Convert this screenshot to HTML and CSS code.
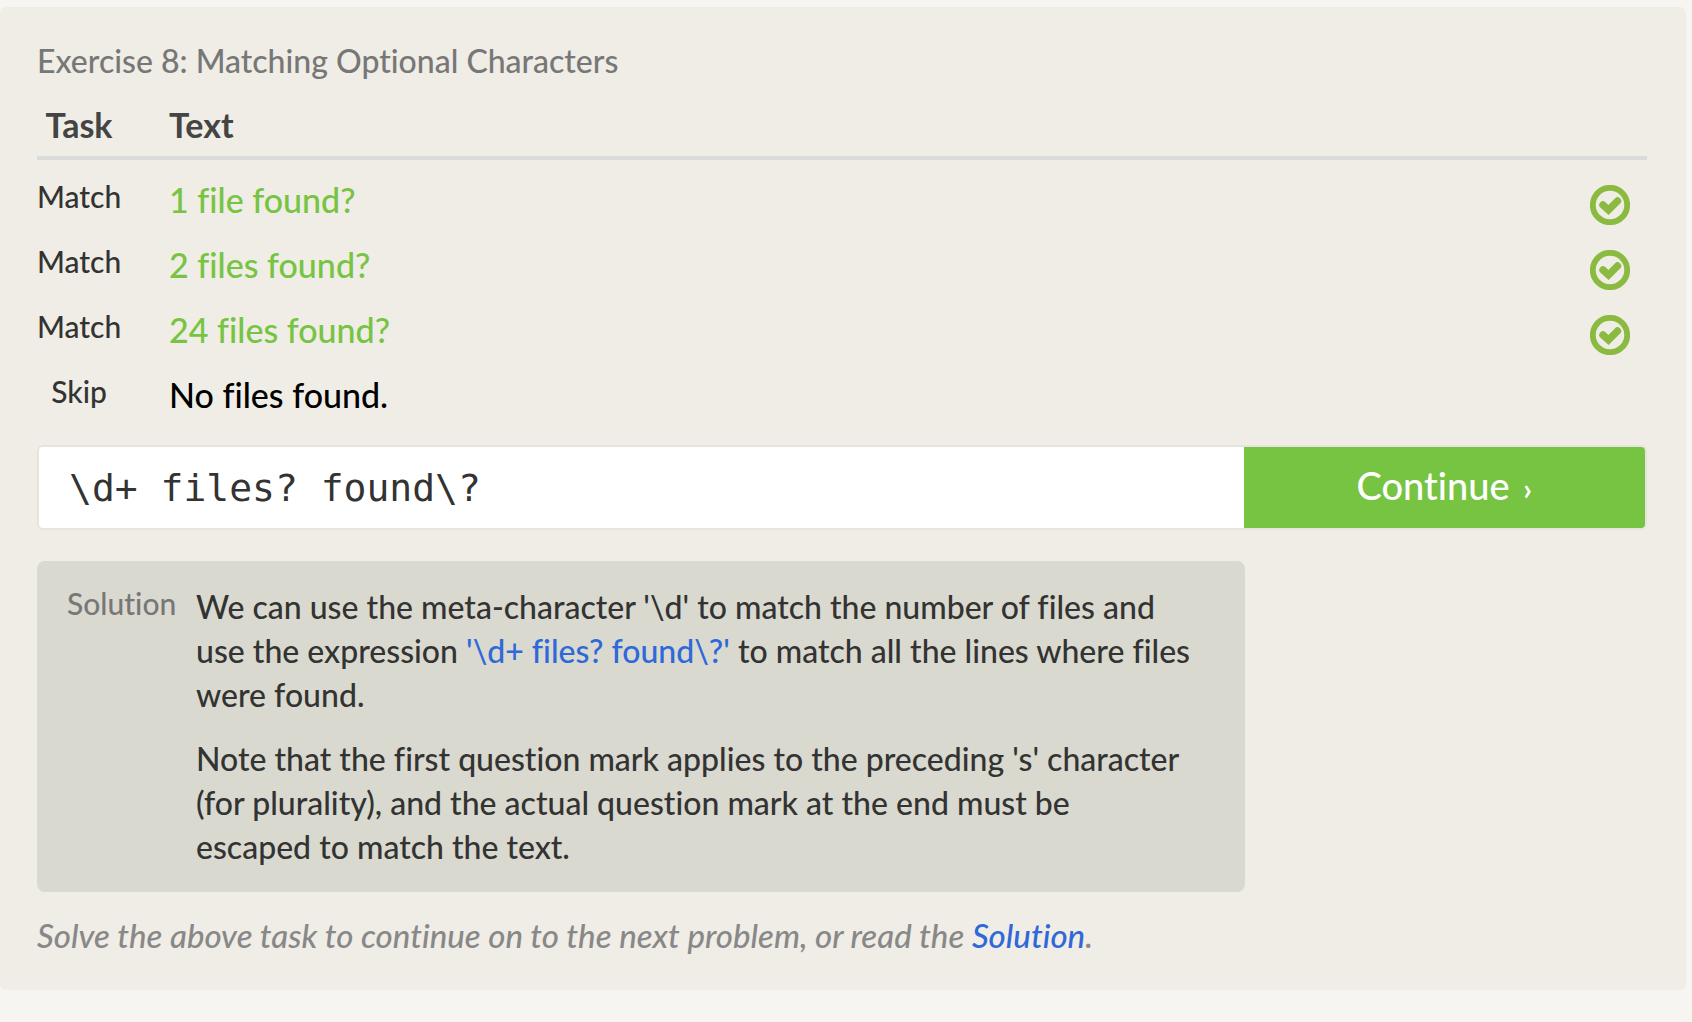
FILE: index.html
```html
<!DOCTYPE html>
<html lang="en">
<head>
<meta charset="utf-8">
<meta name="viewport" content="width=device-width, initial-scale=1">
<title>Exercise 8: Matching Optional Characters</title>
<link rel="stylesheet" href="styles.css">
</head>
<body>
<svg class="sprite" aria-hidden="true">
  <symbol id="check" viewBox="0 0 40 40">
    <circle cx="20" cy="20" r="17.2" fill="none" stroke="#8aba40" stroke-width="5.8"/>
    <path d="M13 20 L18.5 25 L27.5 16" fill="none" stroke="#8aba40" stroke-width="7.4" stroke-linecap="round"/>
  </symbol>
</svg>
<main class="exercise">
  <h1 class="title" id="title">Exercise 8: Matching Optional Characters</h1>
  <table class="tasks" aria-labelledby="title">
    <thead>
      <tr><th class="kind" scope="col">Task</th><th class="sample" scope="col">Text</th><th class="status"></th></tr>
    </thead>
    <tbody>
      <tr><td class="kind">Match</td><td class="sample matched">1 file found?</td><td class="status"><svg class="check" role="img" aria-label="Matched"><use href="#check"/></svg></td></tr>
      <tr><td class="kind">Match</td><td class="sample matched">2 files found?</td><td class="status"><svg class="check" role="img" aria-label="Matched"><use href="#check"/></svg></td></tr>
      <tr><td class="kind">Match</td><td class="sample matched">24 files found?</td><td class="status"><svg class="check" role="img" aria-label="Matched"><use href="#check"/></svg></td></tr>
      <tr><td class="kind">Skip</td><td class="sample">No files found.</td><td class="status"></td></tr>
    </tbody>
  </table>
  <form class="answer">
    <input class="pattern" type="text" aria-label="Regular expression" value="\d+ files? found\?" spellcheck="false">
    <button class="continue" type="button">Continue <span class="chevron">›</span></button>
  </form>
  <section class="solution" id="solution">
    <h2 class="solution-label">Solution</h2>
    <div class="solution-body">
      <p>We can use the meta-character '\d' to match the number of files and use the expression <span class="expression">'\d+ files? found\?'</span> to match all the lines where files were found.</p>
      <p>Note that the first question mark applies to the preceding 's' character (for plurality), and the actual question mark at the end must be escaped&nbsp;to match the text.</p>
    </div>
  </section>
  <p class="hint">Solve the above task to continue on to the next problem, or read the <a class="hint-link" href="#solution">Solution</a>.</p>
</main>
</body>
</html>
```
FILE: styles.css
```css
* {
  box-sizing: border-box;
}

body {
  margin: 0;
  padding: 7px 6px 32px 0;
  background: #f6f5f1;
  color: #333;
  font-family: "Trebuchet MS", Lato, "Open Sans", sans-serif;
  font-size: 32px;
  font-weight: 500;
  line-height: 44px;
  font-variant-ligatures: none;
}

.sprite {
  position: absolute;
  width: 0;
  height: 0;
}

.exercise {
  padding: 32px 39px 33px 37px;
  border-radius: 6px;
  background: #efede5;
}

.title {
  margin: 0;
  color: #777;
  font-size: 32px;
  font-weight: 500;
}

.tasks {
  width: 100%;
  margin-top: 20px;
  border-collapse: separate;
  border-spacing: 0;
  table-layout: fixed;
  text-align: left;
}

.tasks th {
  padding: 0 0 9px;
  border-bottom: 4px solid #dadcdc;
  color: #444;
  font-size: 34px;
  font-weight: 700;
}

.tasks td {
  height: 65px;
  padding: 0;
  vertical-align: bottom;
}

.tasks tbody::before {
  content: "";
  display: table-row;
  height: 12px;
}

.tasks .kind {
  width: 84px;
  text-align: center;
}

.tasks td.kind {
  padding-bottom: 19px;
  font-size: 30px;
}

.tasks .sample {
  padding-left: 48px;
}

.tasks td.sample {
  padding-bottom: 15px;
  color: #000;
  font-size: 34px;
}

.tasks td.matched {
  color: #76c442;
}

.tasks .status {
  width: 57px;
}

.tasks td.status {
  vertical-align: middle;
}

.check {
  display: block;
  width: 40px;
  height: 40px;
}

.answer {
  display: flex;
  height: 85px;
  margin-top: 13px;
  border: 2px solid #e5e4dd;
  border-radius: 6px;
  overflow: hidden;
}

.pattern {
  width: 75%;
  min-width: 0;
  padding: 0 30px;
  border: 0;
  background: #fff;
  color: #333;
  font-family: "DejaVu Sans Mono", monospace;
  font-size: 38px;
}

.continue {
  flex: 1;
  padding: 0 0 5px;
  border: 0;
  background: #76c442;
  color: #fff;
  font-family: inherit;
  font-size: 38px;
  font-weight: 500;
  font-variant-ligatures: none;
  cursor: pointer;
}

.chevron {
  margin-left: 4px;
  font-size: 30px;
  font-weight: 700;
}

.solution {
  display: flex;
  gap: 24px;
  width: 75%;
  margin-top: 31px;
  padding: 24px 48px 23px 30px;
  border-radius: 8px;
  background: #d9d9cf;
}

.solution-label {
  flex: none;
  width: 105px;
  margin: 0;
  color: #777;
  font-size: 30px;
  font-weight: 500;
  line-height: 36px;
}

.solution-body p {
  margin: 0 0 20px;
}

.solution-body p:last-child {
  margin-bottom: 0;
}

.expression {
  color: #2f68d8;
}

.hint {
  margin: 21px 0 0;
  color: #888;
  font-size: 33px;
  font-style: italic;
}

.hint-link {
  color: #2f68d8;
  text-decoration: none;
}
```
